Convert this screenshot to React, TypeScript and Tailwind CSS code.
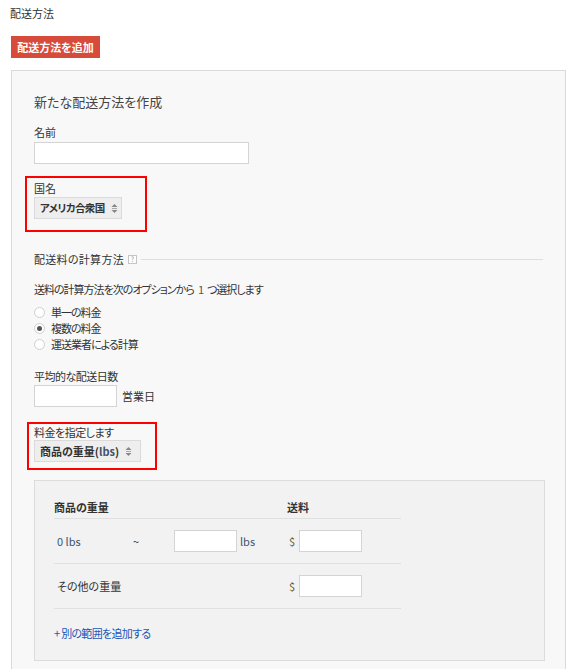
import React from "react";

const font = "font-['Noto_Sans_CJK_JP','Noto_Sans',sans-serif] [font-feature-settings:'palt']";

function UpDown() {
  return (
    <svg width="7" height="11" viewBox="0 0 7 11" className="ml-[6px] shrink-0">
      <path d="M3.5 1 L6.5 4 H0.5 Z" fill="#888" />
      <rect x="1" y="5" width="5" height="1" fill="#aaa" />
      <path d="M3.5 10 L6.5 7 H0.5 Z" fill="#888" />
    </svg>
  );
}

function Radio({ checked, label }: { checked?: boolean; label: string }) {
  return (
    <div className="flex h-[16px] items-center">
      <span className="flex h-[11px] w-[11px] items-center justify-center rounded-full border border-[#cfcfcf] bg-white">
        {checked && <span className="h-[5px] w-[5px] rounded-full bg-[#555]" />}
      </span>
      <span className="ml-[6px] text-[11px] tracking-[-1px] leading-[14px] text-[#333]">{label}</span>
    </div>
  );
}

export default function App() {
  return (
    <div className={`relative h-[669px] w-[584px] overflow-hidden bg-white ${font}`}>
      {/* page title */}
      <div className="pl-[10px] pt-[6px] text-[11px] leading-[14px] text-[#333]">配送方法</div>

      <button className="ml-[11px] mt-[16px] flex h-[22px] w-[89px] items-center justify-center bg-[#d64b3a] text-[11px] font-bold text-white">
        配送方法を追加
      </button>

      {/* panel */}
      <div className="ml-[11px] mt-[12px] h-[640px] w-[555px] border border-[#dadada] bg-[#f8f8f8] pl-[22px] pr-[22px]">
        <div className="mt-[23px] h-[16px] text-[13px] leading-[16px] text-[#444]">新たな配送方法を作成</div>

        <div className="mt-[15px] h-[14px] text-[11px] leading-[14px] text-[#333]">名前</div>
        <div className="mt-[3px] h-[22px] w-[215px] border border-[#d4d4d4] bg-white" />

        {/* country (annotated) */}
        <div className="ml-[-9px] mt-[12px] h-[56px] w-[122px] border-2 border-[#ff0000] pl-[7px] pt-[3px]">
          <div className="h-[14px] text-[11px] leading-[14px] text-[#333]">国名</div>
          <div className="mt-[2px] flex h-[22px] w-[88px] items-center border border-[#dadada] bg-[#eeeeee] pl-[5px]">
            <span className="whitespace-nowrap text-[10.5px] font-bold tracking-[-0.6px] leading-[14px] text-[#333]">アメリカ合衆国</span>
            <UpDown />
          </div>
        </div>

        {/* section header */}
        <div className="mt-[20px] flex h-[14px] items-center">
          <span className="text-[11px] tracking-[0.3px] leading-[14px] text-[#333]">配送料の計算方法</span>
          <span className="ml-[4px] flex h-[9px] w-[9px] items-center justify-center border border-[#c4c4c4] bg-white text-[7px] leading-none text-[#999]">?</span>
          <span className="ml-[4px] h-px flex-1 bg-[#dedede]" />
        </div>

        <div className="mt-[16px] flex h-[14px] items-center whitespace-nowrap text-[11px] tracking-[-1px] leading-[14px] text-[#333]">
          <span>送料の計算方法を次のオプションから</span>
          <span className="mx-[4px] text-[#555]">1</span>
          <span>つ選択します</span>
        </div>

        <div className="mt-[8px]">
          <Radio label="単一の料金" />
          <Radio checked label="複数の料金" />
          <Radio label="運送業者による計算" />
        </div>

        <div className="mt-[17px] h-[14px] text-[11px] tracking-[-0.5px] leading-[14px] text-[#333]">平均的な配送日数</div>
        <div className="mt-[2px] flex items-center">
          <div className="h-[22px] w-[83px] border border-[#d4d4d4] bg-white" />
          <span className="ml-[5px] text-[11px] leading-[14px] text-[#333]">営業日</span>
        </div>

        {/* rate basis (annotated) */}
        <div className="ml-[-7px] mt-[15px] h-[48px] w-[130px] border-2 border-[#ff0000] pl-[5px] pt-[1px]">
          <div className="h-[14px] text-[11px] tracking-[-0.5px] leading-[14px] text-[#333]">料金を指定します</div>
          <div className="mt-[1px] flex h-[22px] w-[107px] items-center border border-[#dadada] bg-[#eeeeee] pl-[5px]">
            <span className="whitespace-nowrap text-[11px] font-bold leading-[14px] text-[#333]">
              商品の重量(<span className="text-[#3d5470]">lbs</span>)
            </span>
            <UpDown />
          </div>
        </div>

        {/* rate table */}
        <div className="mt-[10px] h-[181px] w-[511px] border border-[#dcdcdc] bg-[#f2f2f2] pl-[19px]">
          <div className="mt-[14px] w-[347px]">
            <div className="flex h-[24px] items-center border-b border-[#e0e0e0] text-[11px] font-bold leading-[14px] text-[#333]">
              <span className="w-[233px]">商品の重量</span>
              <span>送料</span>
            </div>
            <div className="flex h-[45px] items-center border-b border-[#e0e0e0] text-[11px] leading-[14px]">
              <div className="flex w-[233px] items-center">
                <span className="w-[79px] pl-[3px] text-[#3d5470]">0 lbs</span>
                <span className="w-[41px] text-[#333]">~</span>
                <div className="h-[22px] w-[63px] border border-[#d4d4d4] bg-white" />
                <span className="ml-[3px] text-[#3d5470]">lbs</span>
              </div>
              <span className="pl-[2px] text-[#6b5a2e]">$</span>
              <div className="ml-[4px] h-[22px] w-[63px] border border-[#d4d4d4] bg-white" />
            </div>
            <div className="flex h-[45px] items-center border-b border-[#e0e0e0] text-[11px] leading-[14px]">
              <span className="w-[233px] pl-[3px] text-[#333]">その他の重量</span>
              <span className="pl-[2px] text-[#6b5a2e]">$</span>
              <div className="ml-[4px] h-[22px] w-[63px] border border-[#d4d4d4] bg-white" />
            </div>
          </div>
          <div className="mt-[17px] h-[14px] text-[11px] tracking-[-0.7px] leading-[14px] text-[#1a55b8]">+ 別の範囲を追加する</div>
        </div>
      </div>
    </div>
  );
}
